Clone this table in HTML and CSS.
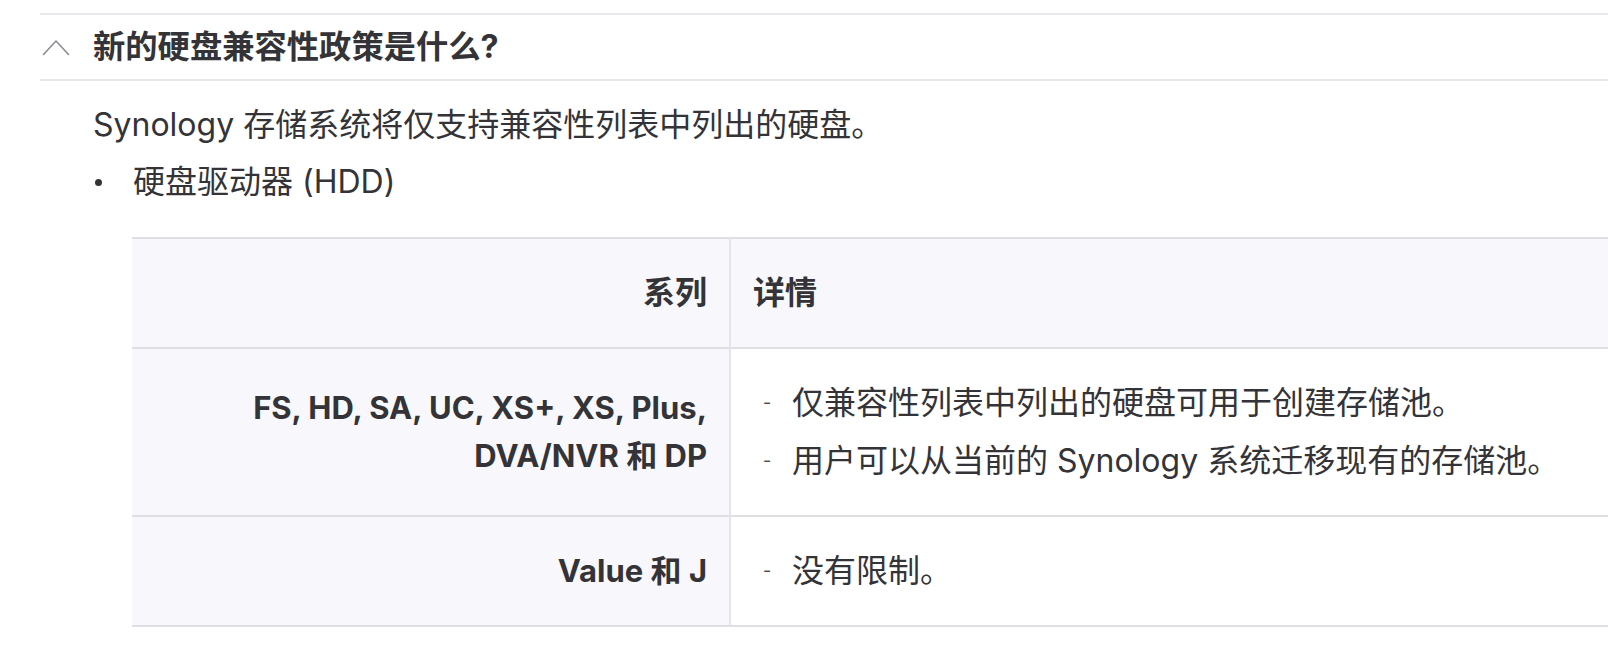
FILE: index.html
```html
<!DOCTYPE html>
<html lang="zh-CN">
<head>
<meta charset="utf-8">
<title>硬盘兼容性</title>
<link rel="stylesheet" href="styles.css">
</head>
<body>
<section class="faq">
  <div class="faq-head">
    <svg class="chev" width="28" height="17" viewBox="0 0 28 17" aria-hidden="true">
      <path d="M1.5 15.5 L14 2 L26.5 15.5" fill="none" stroke="#8c8c92" stroke-width="1.6" stroke-linecap="round" stroke-linejoin="round"/>
    </svg>
    <h2 class="faq-title">新的硬盘兼容性政策是什么?</h2>
  </div>
  <div class="faq-body">
    <p class="lead">Synology 存储系统将仅支持兼容性列表中列出的硬盘。</p>
    <ul class="bullets">
      <li class="bullet"><span class="dot"></span><span>硬盘驱动器 (HDD)</span></li>
    </ul>
    <table class="compat">
      <thead>
        <tr>
          <th class="c-series">系列</th>
          <th class="c-detail">详情</th>
        </tr>
      </thead>
      <tbody>
        <tr>
          <th class="c-series">FS, HD, SA, UC, XS+, XS, Plus,<br>DVA/NVR 和 DP</th>
          <td class="c-detail">
            <ul class="dashes">
              <li>仅兼容性列表中列出的硬盘可用于创建存储池。</li>
              <li>用户可以从当前的 Synology 系统迁移现有的存储池。</li>
            </ul>
          </td>
        </tr>
        <tr>
          <th class="c-series">Value 和 J</th>
          <td class="c-detail">
            <ul class="dashes">
              <li>没有限制。</li>
            </ul>
          </td>
        </tr>
      </tbody>
    </table>
  </div>
</section>
</body>
</html>
```
FILE: styles.css
```css
html, body {
  margin: 0;
  padding: 0;
  background: #ffffff;
  overflow: hidden;
}
body {
  padding-top: 13px;
  font-family: "Inter", "Noto Sans CJK SC", sans-serif;
  color: #333338;
  font-size: 32px;
  line-height: 48px;
}
.faq {
  margin-left: 40px;
}
.faq-head {
  display: flex;
  align-items: center;
  height: 64px;
  border-top: 2px solid #e8e8ec;
  border-bottom: 2px solid #e8e8ec;
  padding-left: 2px;
  gap: 23px;
}
.chev {
  display: block;
  flex: none;
}
.faq-title {
  margin: 0;
  font-size: 32.3px;
  font-weight: 700;
  line-height: 48px;
  color: #333338;
}
.faq-body {
  padding-left: 53px;
}
.lead {
  margin: 20px 0 0;
}
.bullets {
  list-style: none;
  margin: 9px 0 0;
  padding: 0 0 0 2px;
}
.bullet {
  display: flex;
  align-items: center;
}
.dot {
  width: 7px;
  height: 7px;
  border-radius: 50%;
  background: #333338;
  margin-right: 31px;
  flex: none;
}
.compat {
  margin: 31px 0 0 39px;
  width: 1476px;
  border-collapse: separate;
  border-spacing: 0;
  font-size: 32px;
  line-height: 48px;
}
.compat th,
.compat td {
  padding: 30px 22px;
  border-bottom: 2px solid #dedee3;
  vertical-align: middle;
}
.compat thead th {
  border-top: 2px solid #dedee3;
  background: #f8f8fc;
}
.compat th {
  font-weight: 700;
  color: #333338;
}
.compat .c-series {
  width: 553px;
  text-align: right;
  background: #f8f8fc;
  border-right: 2px solid #e4e4ea;
}
.compat tbody .c-series {
  font-size: 31px;
}
.compat .c-detail {
  text-align: left;
}
.compat td {
  background: #ffffff;
  font-weight: 400;
}
.dashes {
  list-style: none;
  margin: 0;
  padding: 0;
}
.dashes li {
  display: flex;
}
.dashes li + li {
  margin-top: 10px;
}
.dashes li::before {
  content: "-";
  flex: none;
  width: 29px;
  padding-left: 10px;
  font-size: 18px;
  color: #4a4a50;
}
```
